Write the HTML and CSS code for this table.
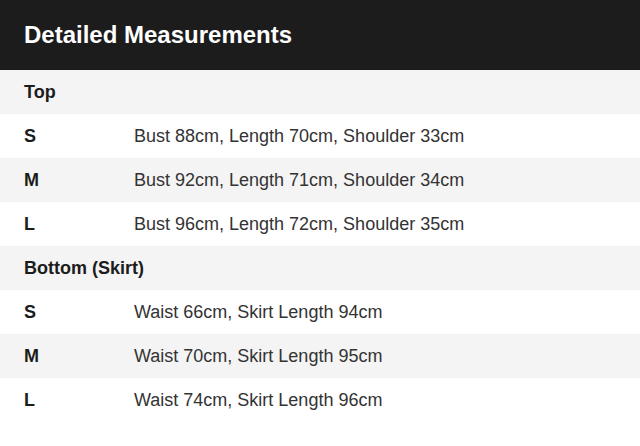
FILE: index.html
```html
<!DOCTYPE html>
<html>
<head>
<meta charset="utf-8">
<link rel="stylesheet" href="styles.css">
</head>
<body>
<div class="card">
  <div class="header">Detailed Measurements</div>
  <div class="row section"><span class="label">Top</span></div>
  <div class="row"><span class="label">S</span><span class="value">Bust 88cm, Length 70cm, Shoulder 33cm</span></div>
  <div class="row alt"><span class="label">M</span><span class="value">Bust 92cm, Length 71cm, Shoulder 34cm</span></div>
  <div class="row"><span class="label">L</span><span class="value">Bust 96cm, Length 72cm, Shoulder 35cm</span></div>
  <div class="row section"><span class="label">Bottom (Skirt)</span></div>
  <div class="row"><span class="label">S</span><span class="value">Waist 66cm, Skirt Length 94cm</span></div>
  <div class="row alt"><span class="label">M</span><span class="value">Waist 70cm, Skirt Length 95cm</span></div>
  <div class="row"><span class="label">L</span><span class="value">Waist 74cm, Skirt Length 96cm</span></div>
</div>
</body>
</html>
```
FILE: styles.css
```css
html, body {
  margin: 0;
  padding: 0;
  background: #ffffff;
}
body {
  font-family: "Liberation Sans", Arial, sans-serif;
  width: 640px;
}
.card {
  display: flex;
  flex-direction: column;
}
.header {
  height: 70px;
  background: #1c1c1c;
  color: #ffffff;
  font-size: 24px;
  font-weight: bold;
  display: flex;
  align-items: center;
  padding: 0 24px;
}
.row {
  height: 44px;
  display: flex;
  align-items: center;
  padding: 0 24px;
  background: #ffffff;
  font-size: 18px;
}
.row.section, .row.alt {
  background: #f4f4f4;
}
.label {
  width: 110px;
  font-weight: bold;
  color: #1c1c1c;
  flex-shrink: 0;
  white-space: nowrap;
}
.value {
  color: #333333;
}
```
